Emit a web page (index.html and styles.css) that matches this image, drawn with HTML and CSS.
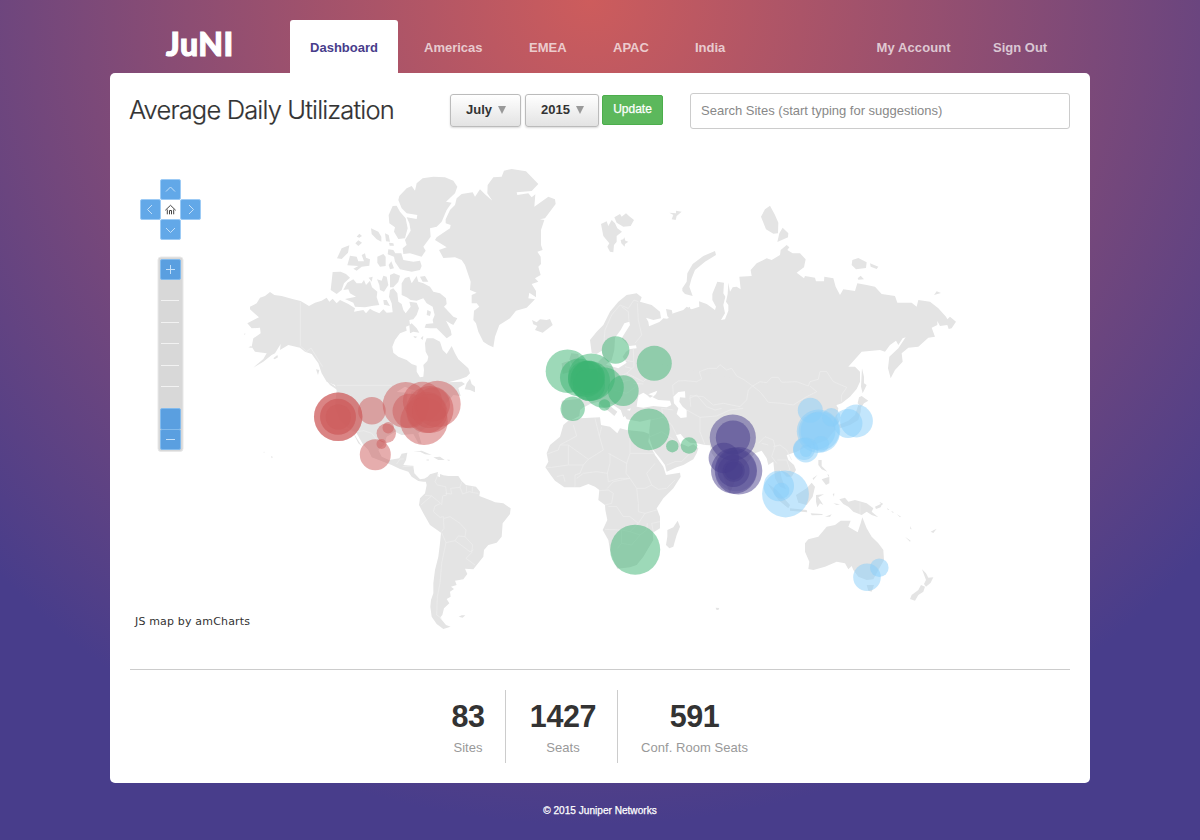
FILE: index.html
```html
<!DOCTYPE html>
<html lang="en">
<head>
<meta charset="utf-8">
<title>JuNI Dashboard</title>
<link rel="stylesheet" href="styles.css">
</head>
<body>
<header class="header">
  <a class="logo">JuNI</a>
  <nav class="nav">
    <a class="tab active">Dashboard</a>
    <a class="tab americas">Americas</a>
    <a class="tab emea">EMEA</a>
    <a class="tab apac">APAC</a>
    <a class="tab india">India</a>
  </nav>
  <nav class="nav account">
    <a class="tab my-account">My Account</a>
    <a class="tab sign-out">Sign Out</a>
  </nav>
</header>
<main class="panel">
  <div class="toolbar">
    <h1 class="title">Average Daily Utilization</h1>
    <div class="filters">
      <button class="select month"><span>July</span><i class="caret"></i></button>
      <button class="select year"><span>2015</span><i class="caret"></i></button>
      <button class="update"><span>Update</span></button>
    </div>
    <input class="search" type="text" placeholder="Search Sites (start typing for suggestions)">
  </div>
  <svg class="map" viewBox="130 150 940 500" width="940" height="500">
    <g class="land">
      <!-- North America -->
      <g transform="translate(240 160) scale(.33333)">
        <path d="M30 440L50 430 60 413 75 408 90 396 103 405 125 408 160 418 182 423 207 438 225 428 245 422 260 413 268 425 278 416 290 430 300 420 325 432 345 445 342 455 370 450 378 460 390 446 400 452 418 460 430 448 440 458 458 457 455 430 447 410 450 390 460 385 472 400 475 425 485 432 490 450 497 460 512 440 508 425 530 428 537 445 530 465 520 478 508 480 510 495 498 500 500 512 480 520 465 540 457 560 460 578 475 590 500 600 515 612 530 617 530 635 540 652 550 650 552 630 550 615 562 603 565 590 557 575 555 550 560 535 580 535 600 545 608 570 620 582 635 558 645 580 655 598 685 625 690 640 680 650 660 658 625 667 665 665 675 672 655 684 662 708 640 705 610 740 590 770 560 800 535 820 545 852 535 850 520 822 485 825 465 815 440 830 432 855 415 870 425 890 447 900 478 895 485 881 502 878 498 900 490 915 520 918 523 940 540 958 560 955 568 965 550 965 535 963 515 950 505 935 480 927 455 915 430 905 395 892 385 870 370 855 350 820 335 810 365 858 355 850 335 810 320 800 300 780 285 740 290 690 285 675 260 665 245 640 235 610 215 582 195 575 180 563 145 555 120 570 122 552 105 580 95 585 70 605 40 623 70 597 80 580 45 575 35 560 40 535 62 520 60 503 35 505 22 490 45 478 57 472 30 448Z"/>
        <path d="M478 108L500 85 515 78 525 92 530 70 548 55 580 50 615 52 640 62 652 80 645 100 618 125 635 128 620 150 605 185 590 200 570 205 572 230 550 260 557 272 545 290 510 280 490 282 488 265 500 255 495 240 512 212 508 190 500 172 530 177 532 165 500 160 485 145 475 120Z"/>
        <path d="M458 138L470 137 480 155 497 175 503 205 495 235 475 237 462 215 465 202 448 190 446 165Z"/>
        <path d="M393 205L415 215 424 230 424 245 410 238 395 222ZM435 220L446 225 450 245 438 244ZM350 230L358 221 366 228 358 233ZM346 250L355 241 366 248 355 258ZM291 295L305 265 328 256 324 278 305 297ZM330 287L350 290 355 304 372 304 365 285 375 280 378 293 390 298 388 317 365 320 350 332 340 326 355 318 322 316ZM412 290L430 282 437 290 437 318 420 320 412 308ZM445 268L460 270 466 280 484 280 490 300 520 305 540 302 545 318 540 330 515 335 480 328 465 305 462 290 443 283ZM446 315L454 304 462 325 450 328ZM447 248L460 250 462 257 449 257ZM450 345L462 340 480 347 475 365 460 382 450 382Z"/>
        <path d="M278 336L302 335 318 342 330 353 312 370 305 390 290 402 272 390ZM310 390L322 368 340 358 350 370 365 370 372 360 378 375 390 362 396 382 412 395 410 412 418 435 400 437 375 442 345 440 340 428 315 417 348 410 330 400 325 388ZM386 353L398 350 395 365ZM411 358L425 362 430 347 440 350 445 375 432 395 420 390 418 375ZM430 420L440 420 450 438 432 434Z"/>
        <path d="M485 370L495 354 508 350 515 370 530 348 535 365 550 370 570 380 580 395 600 400 618 415 620 432 612 440 640 470 652 475 640 495 630 490 618 482 632 510 635 525 620 535 605 520 590 505 570 505 554 503 558 492 580 490 578 480 584 465 578 440 560 430 550 415 530 422 512 420 500 412 485 405ZM540 350L555 348 565 365 548 365ZM562 450L573 455 570 468 560 465ZM508 495L515 490 530 505 538 518 520 515 510 520ZM520 528L532 530 525 535ZM542 535L550 527 548 540Z"/>
        <path d="M690 656L695 672 705 680 705 697 690 690 674 688 680 670ZM228 628L238 630 234 645ZM100 595L112 585 114 592 104 598ZM12 522L16 520 15 525ZM25 562L34 558 36 564ZM258 660L290 682 292 690 270 675ZM520 875L545 872 575 885 555 883 540 875ZM580 892L600 890 614 900 595 900ZM557 900L566 898 566 902ZM620 899L629 899 628 903ZM93 888L99 891 95 895ZM70 876L73 875 73 879ZM656 1370L665 1366 676 1366 668 1373Z"/>
      </g>
      <!-- South America -->
      <path transform="translate(240 370) scale(.33333)" d="M555 325L563 320 570 313 594 306 592 318 600 322 600 312 610 316 625 318 655 318 665 333 678 345 708 350 720 365 718 378 755 392 765 397 790 400 812 415 810 432 788 460 785 500 770 518 745 525 732 540 730 560 700 598 675 596 682 612 670 628 645 632 650 645 633 650 642 657 630 665 632 680 620 687 628 700 612 715 607 735 600 743 618 765 632 770 610 777 590 762 575 740 571 710 573 690 580 670 580 640 585 600 595 560 600 520 603 488 570 465 550 430 537 405 540 385 555 370 560 345Z"/>
      <!-- Greenland, Iceland, Svalbard, Scandinavia -->
      <g transform="translate(430 160) scale(.33333)">
        <path d="M80 115L95 102 128 97 135 110 150 88 165 103 187 122 172 100 173 75 190 52 215 50 222 32 245 27 288 34 325 72 305 93 260 97 262 105 295 100 305 112 316 103 313 140 355 110 375 118 377 132 345 175 330 178 343 180 333 210 333 255 338 270 322 275 332 290 333 312 325 320 332 345 315 355 325 365 305 372 318 393 318 412 298 398 295 415 315 418 290 443 258 452 240 475 208 495 195 530 190 562 175 555 160 545 145 515 138 490 130 480 132 452 148 440 140 430 125 430 125 405 140 398 120 390 122 365 105 315 95 300 75 292 40 294 27 270 50 262 15 240 20 232 60 205 62 195 47 190 47 178 60 150 75 135Z"/>
        <path d="M306 480L320 487 330 478 350 480 360 477 368 495 338 518 315 510 322 498 310 493ZM513 192L530 184 535 198 545 180 555 190 562 205 576 215 560 228 560 245 552 255 550 277 540 275 532 260 538 250 520 228ZM553 172L570 162 575 170 588 160 597 168 612 180 602 198 580 200 560 188ZM572 240L580 238 583 232 586 242 595 245 585 252 584 260 574 250ZM718 158L738 160 738 152 755 155 740 168 737 180 725 178 730 165Z"/>
        <path d="M480 540L500 515 520 495 540 455 565 425 590 405 620 400 635 412 630 425 665 435 690 455 693 475 670 480 648 473 655 485 658 505 675 512 675 500 688 503 685 490 700 475 720 478 712 468 708 447 725 450 728 462 740 465 780 440 780 720 500 720 490 650 505 635 505 605 520 590 515 572 500 582 485 578Z"/>
      </g>
      <!-- Russia -->
      <g transform="translate(660 190) scale(.33333)">
        <path d="M-60 420L0 395 25 385 40 370 70 360 80 350 95 358 118 350 117 334 140 342 165 360 168 350 157 330 157 312 172 275 192 278 190 310 196 320 190 345 195 370 183 390 195 388 205 362 205 345 198 335 203 312 205 278 210 305 218 292 230 290 242 298 238 260 275 258 272 240 290 220 320 205 335 210 360 195 362 180 380 165 388 172 382 180 398 190 420 190 437 208 432 232 410 248 432 265 435 258 465 263 468 274 492 274 493 260 520 265 527 290 540 315 550 298 585 303 592 280 620 285 645 290 665 312 705 318 712 338 755 338 770 350 775 330 810 335 835 355 858 380 862 388 870 380 888 395 875 415 866 417 862 405 840 408 832 393 832 405 815 413 825 440 805 443 775 470 745 473 725 490 728 515 705 540 692 565 684 535 688 500 715 475 737 442 728 445 715 465 708 452 690 465 675 485 660 480 605 485 565 530 585 530 600 545 600 575 590 597 570 620 545 640 530 645 520 670 -60 670Z"/>
        <path d="M67 295L80 275 82 250 98 222 130 198 165 183 168 195 135 215 105 240 95 265 88 290 98 318 75 312 67 303ZM303 80L315 58 330 47 345 75 355 98 354 130 340 131 318 118ZM358 130L368 113 385 130 384 142 352 156ZM577 210L595 204 620 217 618 234 588 238 575 225ZM630 220L655 230 650 237 632 230ZM593 265L602 257 612 268 595 269ZM822 315L830 304 843 309ZM606 535L612 560 612 580 620 585 608 610 603 590ZM597 622L605 618 625 632 612 640 605 650 593 640Z"/>
      </g>
      <!-- Africa and southern Asia -->
      <g transform="translate(530 330) scale(.33333)">
        <path d="M100 285L115 272 150 265 210 262 213 285 240 290 262 310 270 295 290 300 340 305 358 312 355 335 375 375 400 410 408 435 450 428 452 440 430 475 400 505 380 535 390 560 390 595 368 608 370 630 355 655 340 680 320 705 300 712 262 716 250 690 240 660 235 630 218 600 232 570 226 540 225 525 205 510 208 480 195 470 175 462 150 472 103 472 75 452 62 435 46 412 55 395 50 370 60 345 90 320ZM443 572L450 590 440 615 430 650 418 655 408 645 412 620 412 600 430 592Z"/>
        <path d="M95 212L150 206 172 218 165 228 150 240 148 258 125 270 112 270 97 262ZM124 70L145 72 150 105 170 140 168 155 130 162 140 135 130 110 118 88ZM95 100L118 92 122 125 98 132Z"/>
        <path d="M150 210L130 172 165 165 190 150 200 130 240 110 330 90 900 200 925 235 915 300 890 330 850 345 820 355 800 365 770 375 775 390 792 405 798 420 785 440 770 440 760 430 750 420 755 445 768 478 750 470 735 445 730 395 715 405 710 385 695 362 675 370 650 400 620 440 600 490 580 440 560 390 545 370 540 346 525 345 500 340 480 338 462 325 452 312 438 315 450 340 475 350 490 343 505 355 500 370 490 388 460 405 440 412 410 425 405 405 390 385 370 360 358 325 358 300 362 268 330 275 290 268 285 258 280 262 272 240 250 225 235 218 245 232 262 245 253 258 240 247 215 228 205 215 180 222 165 230Z"/>
      </g>
      <!-- South-east Asia and Oceania -->
      <g transform="translate(690 380) scale(.33333)">
        <path d="M345 490L355 478 385 470 410 440 435 435 452 422 482 422 475 440 503 457 512 430 517 412 530 445 545 470 565 490 580 510 582 540 565 570 550 598 530 600 505 590 490 570 485 558 475 568 465 550 440 545 405 560 370 570 355 567 358 545 345 515ZM530 615L552 615 545 635 535 632ZM696 568L708 580 715 593 730 592 722 608 708 620 702 612 708 600ZM693 615L705 620 700 635 685 645 675 662 660 657 665 645 685 630Z"/>
        <path d="M415 95L435 95 447 125 435 137 425 120ZM505 75L513 78 512 95 505 120 480 135 450 145 445 135 475 122 495 105ZM232 310L260 330 300 375 295 385 265 360ZM300 385L350 390 352 397 300 392ZM318 345L350 325 365 308 375 320 368 350 350 375 325 368ZM378 345L402 343 385 352 400 375 390 370 382 382 378 365ZM385 240L395 240 395 258 412 275 395 268 385 255ZM395 298L418 290 418 310 408 315ZM412 282L417 285 416 292ZM368 295L382 285 370 300ZM362 400L395 402 400 405 365 406ZM405 410L425 403 420 410ZM428 342L433 340 432 350ZM430 370L450 373 440 375ZM448 358L465 353 475 365 495 360 530 370 550 385 545 395 565 412 545 405 530 395 515 405 490 395 475 380 460 372ZM555 380L577 370 572 382 558 387ZM568 365L580 372 575 375ZM590 383L598 390 594 390ZM603 392L612 397 608 398ZM620 402L633 410 630 412ZM645 470L662 482 660 485ZM722 455L732 450 740 446 730 459ZM660 438L665 448 661 447ZM77 683L88 684 85 690 79 689Z"/>
      </g>
    </g>
    <g class="water">
      <path transform="translate(430 160) scale(.33333)" d="M598 485L583 490 572 510 555 533 553 570 545 600 528 614 565 625 590 608 578 590 588 575 600 567 620 565 618 556 598 558 575 535 600 495Z"/>
      <path transform="translate(530 330) scale(.33333)" d="M322 215L326 196 340 188 352 196 360 203 370 198 355 193 382 182 378 192 368 202 385 210 420 212 424 225 410 232 370 228 340 233 320 230ZM430 200L445 186 465 184 466 203 450 202 448 215 458 230 470 240 470 262 452 264 440 252 445 235 432 220ZM290 240L302 235 300 242Z"/>
      <path transform="translate(240 370) scale(.33333)" d="M470 66L495 50 512 58 540 66 515 64 505 100 500 90 503 68Z"/>
    </g>
    <g class="borders">
      <path transform="translate(240 160) scale(.33333)" d="M181 425V558L200 575 213 564 235 600 248 620M290 676H455M310 808L350 815 372 812 395 820 415 845 430 855M470 912L480 897 492 897M488 920L520 918"/>
      <path transform="translate(240 370) scale(.33333)" d="M595 312L585 335 592 345 617 350 620 375 608 378 605 405 M617 370L635 372 632 355 660 352 665 335M660 352L668 372 688 365 700 368 715 370M680 347V365M697 350L697 366M543 405L560 390 575 378 555 376M575 378L602 400 585 408 580 425 600 442 610 440 612 475 605 485M612 445L630 440 660 460 678 480 675 500 655 498 645 512 618 518 605 488M645 512L690 545 700 540M675 500L698 525 695 548 678 565 705 585M618 518L605 580 600 640 592 680 590 735 605 745"/>
      <path transform="translate(430 160) scale(.33333)" d="M522 545L525 510 545 465 570 435 595 445 612 420 625 425M575 440L595 455 597 485M622 430L625 480 635 525 615 550M580 600L610 605M585 620L605 625M610 565L612 620 590 640M555 655L590 640 640 665 655 650M610 670L640 672"/>
      <path transform="translate(660 190) scale(.33333)" d="M40 615L38 585 55 573 75 572 110 575 125 567 118 545 145 535 170 535 180 524 200 540 215 535 230 558 250 568 278 588 300 575 320 578 335 562 355 562 365 577 410 575 445 588 450 575 475 568 480 545 500 545 520 575 560 592 545 615 545 635M278 588L300 605 325 637 365 640 400 645 440 620 470 605 450 588M278 588L265 600 260 630 240 650 190 640 160 645 130 620 90 617 92 650"/>
      <path transform="translate(530 330) scale(.33333)" d="M130 285L140 318 90 345 115 345 175 388 220 360 208 318 195 265M208 318L215 290M115 345L115 405 65 412 50 412M90 345L85 360 52 372M115 405L160 405 175 388M300 300V370H375M300 370L290 400 235 370M240 370L240 400 232 430 200 425 160 430 140 445M160 405L150 430 135 435 135 470M80 440L100 435 105 455M290 400L288 430 300 445 270 445 235 455 232 430M232 475L250 455 300 445 320 475 345 475 365 465 350 430 375 400M365 465L385 478 410 475 435 450M225 525L245 520 250 490 235 480 208 482M320 475L325 520 325 545 345 550 380 540M235 530L260 530 280 560 300 560 325 580 345 550M225 598L275 600 275 640 262 655M275 600L300 605 325 580M300 605L330 615 350 600 352 580M275 640L305 645 330 615M370 605L365 580 390 575M255 140L275 155 300 150M250 180L290 190 325 165M362 270L400 262 425 285 440 315M400 262L395 235 430 240M360 320L395 305 440 335M410 405L435 395 455 395 480 370M470 240L510 262 510 305 525 345M510 262L560 258 600 240 640 235M478 205L500 195 530 230 555 240 575 235"/>
      <path transform="translate(690 380) scale(.33333)" d="M205 190L225 170 250 180 255 200 245 230 260 250M250 200L270 195 290 210 305 240M262 240L290 240 300 270 280 275M215 190L235 195M510 368V402"/>
    </g>
    <g class="americas-sites">
      <circle cx="338.2" cy="416.8" r="24.2"/><circle cx="338.2" cy="416.8" r="24.2"/><circle cx="338" cy="416.8" r="18"/><circle cx="338" cy="416.8" r="17.8"/><circle cx="338.3" cy="417" r="12.6"/>
      <circle cx="371.9" cy="410.8" r="13.8"/><circle cx="405.7" cy="405" r="23"/><circle cx="409.8" cy="411" r="17.3"/>
      <circle cx="422.5" cy="401.3" r="19.6"/><circle cx="437.5" cy="404" r="23.2"/><circle cx="424" cy="421.3" r="23.7"/><circle cx="430" cy="409.5" r="23.5"/><circle cx="427" cy="412.5" r="20.5"/><circle cx="433" cy="404.5" r="17"/><circle cx="429" cy="411" r="17"/>
      <circle cx="386.3" cy="433.3" r="9.7"/><circle cx="388.2" cy="427.7" r="5.7"/><circle cx="375.3" cy="454.7" r="15.5"/><circle cx="381.5" cy="444" r="5"/>
    </g>
    <g class="emea-sites">
      <circle cx="567.5" cy="371.2" r="21.8"/><circle cx="579" cy="377.5" r="19"/><circle cx="591.5" cy="377" r="23.5"/><circle cx="590" cy="381" r="20"/><circle cx="586" cy="379" r="18"/><circle cx="588" cy="378" r="17"/><circle cx="603.5" cy="387.5" r="20.3"/><circle cx="589" cy="385" r="16"/><circle cx="588.5" cy="376.5" r="16"/><circle cx="623.3" cy="390.7" r="15.4"/>
      <circle cx="615.6" cy="350" r="13.8"/><circle cx="654.3" cy="363.3" r="17.5"/><circle cx="572.7" cy="408.8" r="12.2"/><circle cx="604.5" cy="405" r="5.8"/>
      <circle cx="648.8" cy="429.3" r="20.9"/><circle cx="672.3" cy="446.2" r="6.2"/><circle cx="689" cy="445.5" r="8.3"/><circle cx="635.2" cy="549.7" r="25"/>
    </g>
    <g class="india-sites">
      <circle cx="732.8" cy="437.7" r="23.1"/><circle cx="733" cy="437.7" r="17.2"/><circle cx="723.8" cy="458" r="15.2"/><circle cx="738.5" cy="470.8" r="23.8"/><circle cx="734" cy="470.7" r="23"/><circle cx="736" cy="470.7" r="20.5" fill-opacity=".2"/><circle cx="733.5" cy="471" r="16"/><circle cx="733.7" cy="470.7" r="11"/><circle cx="733.7" cy="470.7" r="9"/>
    </g>
    <g class="apac-sites">
      <circle cx="810.3" cy="410.3" r="12.5"/><circle cx="818.5" cy="431.3" r="21.7"/><circle cx="820" cy="431" r="19.5"/><circle cx="817" cy="431" r="18.5"/><circle cx="831.3" cy="417.3" r="9.2"/><circle cx="821" cy="444" r="8"/><circle cx="805.8" cy="450" r="12.5"/><circle cx="804" cy="449" r="11"/><circle cx="806" cy="451" r="6"/><circle cx="856.5" cy="421" r="16.4"/><circle cx="848" cy="423.5" r="14.4"/><circle cx="785.5" cy="494" r="23.4"/><circle cx="778.8" cy="486" r="15.2"/><circle cx="781.3" cy="490.7" r="8"/><circle cx="867" cy="577.3" r="13.8"/><circle cx="879.3" cy="567.7" r="9.3"/>
    </g>
    <g class="pan">
      <rect x="160.5" y="179.5" width="20" height="20" rx="1.5"/><rect x="140.5" y="199.5" width="20" height="20" rx="1.5"/><rect x="180.5" y="199.5" width="20" height="20" rx="1.5"/><rect x="160.5" y="219.5" width="20" height="20" rx="1.5"/>
      <path class="glyph" d="M166 191.5L170.5 187 175 191.5M152 205L147.5 209.5 152 214M189 205L193.5 209.5 189 214M166 228L170.5 232.5 175 228"/>
      <path class="home" d="M165.3 210.3L170.5 205.3 175.7 210.3M167.3 209.5V214.3M173.7 209.5V214.3M169.5 214.3V210.5H171.5V214.3"/>
    </g>
    <g class="zoom">
      <rect class="track" x="158" y="257" width="25" height="194.5" rx="3"/>
      <path class="ticks" d="M161 300.5H179M161 322.5H179M161 343.5H179M161 365.5H179M161 386.5H179"/>
      <rect x="160.5" y="259.5" width="20" height="20" rx="1.5"/><rect x="160.5" y="408.5" width="20" height="21" rx="1.5"/><rect x="160.5" y="429.5" width="20" height="20" rx="1.5"/>
      <path class="glyph" d="M166 269.5H175M170.5 265V274M166 439.5H175"/>
    </g>
    <text class="credit" x="135" y="625" textLength="115">JS map by amCharts</text>
  </svg>
  <section class="stats">
    <div class="stat sites"><strong>83</strong><span>Sites</span></div>
    <div class="stat seats"><strong>1427</strong><span>Seats</span></div>
    <div class="stat rooms"><strong>591</strong><span>Conf. Room Seats</span></div>
  </section>
</main>
<footer class="footer">© 2015 Juniper Networks</footer>
</body>
</html>
```
FILE: styles.css
```css
* { box-sizing: border-box; }
body {
  margin: 0;
  height: 840px;
  overflow: hidden;
  font: 13px "Liberation Sans", Arial, sans-serif;
  color: #333;
  background: #483d8b radial-gradient(circle 825px at 590px 0, #cd5c5c, #483d8b);
}
.header { width: 980px; height: 73px; margin: 0 auto; display: flex; padding: 20px 20px 0 56px; }
.logo { width: 124px; font: 900 32px/47px Lato, sans-serif; color: #fff; -webkit-text-stroke: 1.1px #fff; letter-spacing: .5px; }
.nav { display: flex; }
.account { margin-left: auto; }
.tab { height: 53px; line-height: 56px; font-weight: bold; color: rgba(255, 255, 255, .7); white-space: nowrap; }
.active { width: 108px; text-align: center; background: #fff; color: #483d8b; border-radius: 3px 3px 0 0; margin-right: 26px; }
.americas { width: 105px; }
.emea { width: 84px; }
.apac { width: 82px; }
.my-account { width: 116.5px; letter-spacing: .1px; }
.sign-out { width: 77px; }
.panel { width: 980px; height: 710px; margin: 0 auto; padding: 20px; background: #fff; border-radius: 5px; }
.toolbar { display: flex; height: 57px; align-items: flex-start; }
.title { width: 320px; margin: 0 0 0 -1px; font: 300 25.5px/33px Inter, "Liberation Sans", sans-serif; letter-spacing: -.84px; white-space: nowrap; -webkit-text-stroke: .2px #333; }
.filters { display: flex; width: 240px; margin-left: 1px; padding-top: 1px; }
button { font-family: inherit; padding: 0; }
.select { display: flex; align-items: center; justify-content: center; gap: 6px; height: 33px; margin-right: 4px; padding-left: 1px; border: 1px solid #bbb; border-radius: 3px; background: linear-gradient(#fff, #e3e3e3); box-shadow: 0 1px 2px rgba(0, 0, 0, .15); font-size: 13px; font-weight: bold; color: #333; }
.select span { position: relative; top: -1px; }
.month { width: 71px; }
.year { width: 74px; margin-right: 3px; }
.caret { border: 4.5px solid transparent; border-top: 8px solid #999; border-bottom: 0; margin-top: -1px; }
.update { width: 61px; height: 30px; margin-top: 1px; border: 1px solid #4cae4c; border-radius: 2px; background: #5cb85c; color: #fff; font-size: 12px; font-weight: normal; -webkit-text-stroke: .25px #fff; }
.update span { position: relative; top: -1px; }
.search { width: 380px; height: 36px; padding: 0 10px 1px; border: 1px solid #ccc; border-radius: 3px; font: 13px "Liberation Sans", Arial, sans-serif; }
.search::placeholder { color: #888; }
.map { display: block; }
.land { fill: #e4e4e4; }
.water { fill: #fff; }
.borders { fill: none; stroke: #efefef; stroke-width: 2; stroke-linejoin: round; }
.americas-sites { fill: #cd5c5c; }
.emea-sites { fill: #3cb371; }
.india-sites { fill: #483d8b; }
.apac-sites { fill: #87cefa; }
.map [class$="-sites"] { fill-opacity: .5; }
.pan rect { fill: #62a8e8; stroke: #9dcbf5; }
.zoom rect { fill: #5a9fe0; stroke: #83bbed; }
.zoom .track { fill: #d8d8d8; stroke: #e8e8e8; }
.ticks { stroke: #f2f2f2; }
.glyph { fill: none; stroke: #c4e0f9; }
.home { fill: none; stroke: #444; }
.credit { font: 11px "DejaVu Sans", Verdana, sans-serif; fill: #333; }
.stats { display: flex; justify-content: center; height: 94px; margin-top: 19px; padding: 20px 0 0 2px; border-top: 1px solid #ccc; }
.stat { height: 73px; text-align: center; border-right: 1px solid #ccc; }
.stat strong { display: block; font-size: 30.5px; line-height: 34px; padding-top: 9px; letter-spacing: -.4px; }
.stat span { display: block; color: #999; line-height: 15px; padding-top: 7px; letter-spacing: .05px; }
.sites { width: 75px; }
.seats { width: 112px; padding-left: 3px; }
.rooms { width: 153px; border: 0; }
.footer { text-align: center; color: #fff; font-size: 10.1px; line-height: 56px; -webkit-text-stroke: .25px #fff; }
```
